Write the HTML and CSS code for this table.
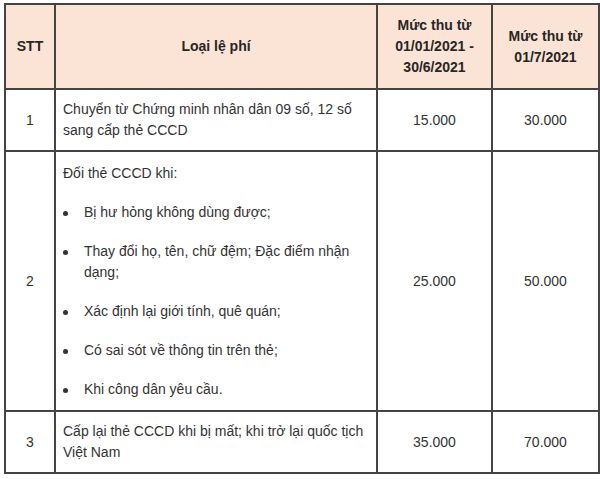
FILE: index.html
```html
<!DOCTYPE html>
<html lang="vi">
<head>
<meta charset="utf-8">
<link rel="stylesheet" href="styles.css">
</head>
<body>
<table class="fees">
  <colgroup>
    <col class="c-stt">
    <col class="c-name">
    <col class="c-old">
    <col class="c-new">
  </colgroup>
  <thead>
    <tr>
      <th>STT</th>
      <th>Loại lệ phí</th>
      <th>Mức thu từ<br>01/01/2021 -<br>30/6/2021</th>
      <th>Mức thu từ<br>01/7/2021</th>
    </tr>
  </thead>
  <tbody>
    <tr class="r1">
      <td class="num">1</td>
      <td class="desc">Chuyển từ Chứng minh nhân dân 09 số, 12 số sang cấp thẻ CCCD</td>
      <td class="num">15.000</td>
      <td class="num">30.000</td>
    </tr>
    <tr class="r2">
      <td class="num">2</td>
      <td class="desc">
        <div class="stack">
          <p>Đổi thẻ CCCD khi:</p>
          <ul>
            <li>Bị hư hỏng không dùng được;</li>
            <li>Thay đổi họ, tên, chữ đệm; Đặc điểm nhận dạng;</li>
            <li>Xác định lại giới tính, quê quán;</li>
            <li>Có sai sót về thông tin trên thẻ;</li>
            <li>Khi công dân yêu cầu.</li>
          </ul>
        </div>
      </td>
      <td class="num">25.000</td>
      <td class="num">50.000</td>
    </tr>
    <tr class="r3">
      <td class="num">3</td>
      <td class="desc">Cấp lại thẻ CCCD khi bị mất; khi trở lại quốc tịch Việt Nam</td>
      <td class="num">35.000</td>
      <td class="num">70.000</td>
    </tr>
  </tbody>
</table>
</body>
</html>
```
FILE: styles.css
```css
html, body {
  margin: 0;
  background: #ffffff;
}
body {
  padding: 3px 0 0 4px;
  font-family: "Liberation Sans", Arial, sans-serif;
  font-size: 14px;
  line-height: 21px;
  color: #333333;
}
.fees {
  border-collapse: collapse;
  table-layout: fixed;
  width: 594px;
}
.c-stt { width: 50px; }
.c-name { width: 322px; }
.c-old { width: 115px; }
.c-new { width: 107px; }

.fees th,
.fees td {
  border: 2px solid #444444;
  vertical-align: middle;
}
.fees th {
  background: #fbe4d5;
  font-weight: bold;
  color: #262626;
  text-align: center;
  padding: 10px 6px;
  height: 61px;
}
.fees td {
  padding: 9px 7px;
}
.fees td.num {
  text-align: center;
}
.fees td.desc {
  text-align: left;
}
.r2 td.desc {
  padding-top: 11px;
  padding-bottom: 10px;
}
.stack {
  display: flex;
  flex-direction: column;
  gap: 18px;
}
.stack p {
  margin: 0;
}
.stack ul {
  margin: 0;
  padding: 0;
  list-style: none;
  display: flex;
  flex-direction: column;
  gap: 18px;
}
.stack li {
  display: flex;
  align-items: flex-start;
}
.stack li::before {
  content: "";
  flex: none;
  width: 5px;
  height: 5px;
  border-radius: 50%;
  background: #333333;
  margin: 9px 16px 0 0;
}
```
